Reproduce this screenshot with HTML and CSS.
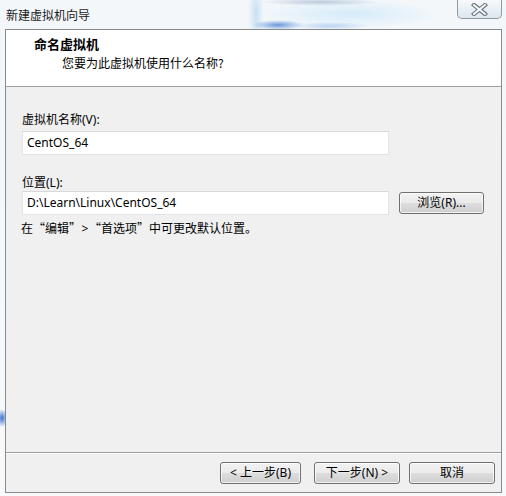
FILE: index.html
```html
<!DOCTYPE html>
<html lang="zh-CN">
<head>
<meta charset="utf-8">
<title>新建虚拟机向导</title>
<link rel="stylesheet" href="styles.css">
</head>
<body>
<div class="window">
  <div class="titlebar">
    <span class="title">新建虚拟机向导</span>
    <button class="close" type="button" aria-label="关闭">
      <svg width="19" height="13" viewBox="0 0 19 13">
        <path d="M4 2 L15 11 M15 2 L4 11" stroke="#6a747c" stroke-width="4.2" stroke-linecap="square" fill="none"/>
        <path d="M4 2 L15 11 M15 2 L4 11" stroke="#f4f6f8" stroke-width="2" stroke-linecap="square" fill="none"/>
      </svg>
    </button>
  </div>
  <div class="client">
    <div class="header">
      <div class="h-title">命名虚拟机</div>
      <div class="h-sub">您要为此虚拟机使用什么名称?</div>
    </div>
    <div class="content">
      <div class="label">虚拟机名称(V):</div>
      <div class="input name-input">CentOS_64</div>
      <div class="label loc-label">位置(L):</div>
      <div class="loc-row">
        <div class="input">D:\Learn\Linux\CentOS_64</div>
        <button class="btn browse" type="button">浏览(R)...</button>
      </div>
      <div class="hint">在<span class="q ql">“</span>编辑<span class="q qr">”</span><span class="gt">&gt;</span><span class="q ql">“</span>首选项<span class="q qr">”</span>中可更改默认位置。</div>
    </div>
    <div class="footer">
      <button class="btn back" type="button">&lt; 上一步(B)</button>
      <button class="btn next" type="button">下一步(N) &gt;</button>
      <button class="btn cancel" type="button">取消</button>
    </div>
  </div>
</div>
</body>
</html>
```

FILE: styles.css
```css
* { box-sizing: border-box; }

html, body {
  margin: 0;
  padding: 0;
}

body {
  width: 506px;
  height: 496px;
  overflow: hidden;
  font-family: "Noto Sans", "Noto Sans CJK SC", sans-serif;
  font-size: 12px;
  color: #000;
  background:
    radial-gradient(ellipse 6px 9px at 2px 418px, rgba(40,100,200,0.9), rgba(40,100,200,0) 100%),
    radial-gradient(ellipse 26px 5px at 278px 25px, rgba(60,120,210,0.75), rgba(60,120,210,0) 100%),
    radial-gradient(ellipse 40px 4px at 330px 26px, rgba(120,170,230,0.45), rgba(120,170,230,0) 100%),
    radial-gradient(ellipse 60px 4px at 320px 2px, rgba(90,120,160,0.35), rgba(90,120,160,0) 100%),
    radial-gradient(ellipse 90px 14px at 350px 14px, rgba(200,230,250,0.7), rgba(200,230,250,0) 100%),
    radial-gradient(ellipse 8px 40px at 256px 14px, rgba(190,220,240,0.8), rgba(190,220,240,0) 100%),
    linear-gradient(180deg, #f3f7fa 0%, #f7f9fb 100%);
}

.window {
  position: relative;
  height: 496px;
  padding: 0 4px 3px 5px;
  display: flex;
  flex-direction: column;
}

.titlebar {
  height: 29px;
  display: flex;
  align-items: center;
  padding-left: 1px;
  padding-bottom: 1px;
}

.title {
  font-family: "Noto Sans CJK SC", sans-serif;
  font-size: 12px;
  color: #1a1a1a;
}

.close {
  position: absolute;
  top: 0;
  right: 4px;
  width: 45px;
  height: 19px;
  padding: 0;
  border: 1px solid #8e9aa6;
  border-top: none;
  border-radius: 0 0 5px 5px;
  background: linear-gradient(180deg, #f6f9fb 0%, #e9f0f5 50%, #dde7ee 100%);
  display: flex;
  align-items: center;
  justify-content: center;
}

.client {
  flex: 1;
  border: 1px solid #8a8a8a;
  display: flex;
  flex-direction: column;
  background: #f0f0f0;
}

.header {
  height: 57px;
  background: #fff;
  border-bottom: 1px solid #a0a0a0;
  padding: 6px 0 0 28px;
}

.h-title {
  font-family: "Noto Sans CJK SC", sans-serif;
  font-weight: bold;
  font-size: 13px;
  line-height: 16px;
}

.h-sub {
  font-family: "Noto Sans CJK SC", sans-serif;
  margin-top: 3px;
  padding-left: 28px;
  line-height: 16px;
}

.content {
  flex: 1;
  padding: 25px 0 0 16px;
}

.label {
  line-height: 16px;
}

.loc-label {
  margin-top: 20px;
}

.input {
  width: 367px;
  height: 24px;
  background: #fff;
  border: 1px solid #e2e3e4;
  border-top-color: #d8d9da;
  padding: 0 4px;
  line-height: 22px;
}

.name-input {
  margin-top: 3px;
}

.loc-row {
  display: flex;
  align-items: center;
}

.btn {
  font-family: "Noto Sans", "Noto Sans CJK SC", sans-serif;
  font-size: 12px;
  color: #000;
  height: 22px;
  padding: 0;
  border: 1px solid #707070;
  border-radius: 3px;
  background: linear-gradient(180deg, #f2f2f2 0%, #ebebeb 48%, #dddddd 52%, #cfcfcf 100%);
  box-shadow: inset 0 0 0 1px rgba(255,255,255,0.75);
  line-height: 20px;
}

.browse {
  width: 85px;
  margin-left: 10px;
}

.hint {
  margin-top: 5px;
  line-height: 16px;
  margin-left: -1px;
}

.q {
  display: inline-block;
  width: 12px;
  font-family: "Noto Sans CJK SC", sans-serif;
}

.ql { text-align: right; }
.qr { text-align: left; }

.gt {
  display: inline-block;
  width: 8px;
  text-align: center;
}

.footer {
  height: 40px;
  border-top: 1px solid #a0a0a0;
  box-shadow: inset 0 1px 0 #fff;
  display: flex;
  justify-content: flex-end;
  align-items: flex-start;
  padding: 9px 6px 0 0;
}

.back { width: 81px; }
.next { width: 86px; margin-left: 13px; }
.cancel { width: 86px; margin-left: 9px; }
```
